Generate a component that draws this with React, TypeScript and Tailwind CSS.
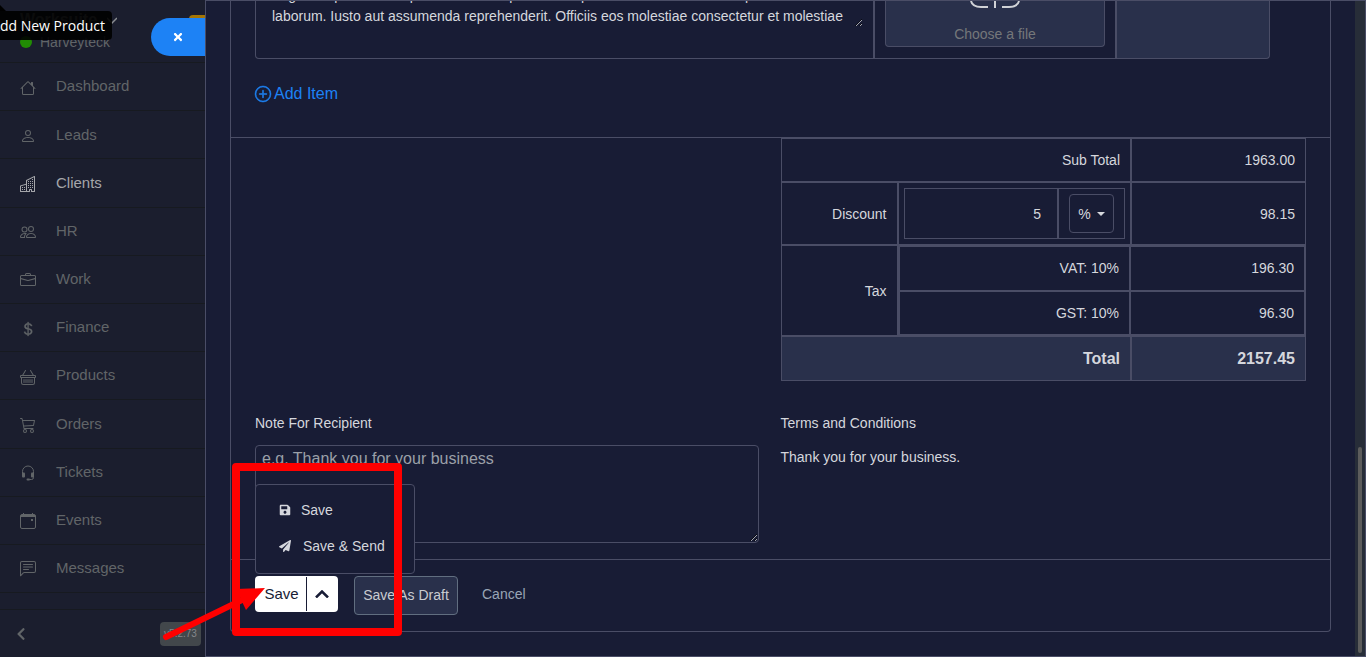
import { useState } from "react"
import type { ReactNode } from "react"
import {
  BsBasket,
  BsBriefcase,
  BsBuildings,
  BsCart3,
  BsChatLeftText,
  BsCurrencyDollar,
  BsHouse,
  BsPeople,
  BsPerson,
  BsPlusCircle,
} from "react-icons/bs"
import { FaChevronLeft, FaPaperPlane, FaSave, FaTimes } from "react-icons/fa"
import clsx from "clsx"

function EventsIcon() {
  return (
    <svg className="size-4" viewBox="0 0 16 16" fill="none" stroke="currentColor">
      <rect x="0.5" y="1.5" width="15" height="14" rx="1.5" />
      <path d="M1 2.5h14M1 3.5h14" />
      <path d="M3.5 0v2M12.5 0v2" />
      <rect x="11" y="6" width="2" height="2" fill="currentColor" stroke="none" />
    </svg>
  )
}

function TicketsIcon() {
  return (
    <svg className="size-4" viewBox="0 0 16 16" fill="none" stroke="currentColor">
      <path d="M2.5 9V6.5a5.5 5.5 0 0 1 11 0v6a2 2 0 0 1-2 2H9.5" />
      <rect x="2" y="7.5" width="3" height="5" rx="1" fill="currentColor" stroke="none" />
      <rect x="11" y="7.5" width="3" height="5" rx="1" fill="currentColor" stroke="none" />
      <rect x="6.5" y="13.5" width="3.5" height="2" rx="1" fill="currentColor" stroke="none" />
    </svg>
  )
}

interface MenuItem {
  label: string
  icon: ReactNode
  active?: boolean
}

const menu: MenuItem[] = [
  { label: "Dashboard", icon: <BsHouse /> },
  { label: "Leads", icon: <BsPerson /> },
  { label: "Clients", icon: <BsBuildings />, active: true },
  { label: "HR", icon: <BsPeople /> },
  { label: "Work", icon: <BsBriefcase /> },
  { label: "Finance", icon: <BsCurrencyDollar stroke="currentColor" strokeWidth="0.3" /> },
  { label: "Products", icon: <BsBasket /> },
  { label: "Orders", icon: <BsCart3 /> },
  { label: "Tickets", icon: <TicketsIcon /> },
  { label: "Events", icon: <EventsIcon /> },
  { label: "Messages", icon: <BsChatLeftText /> },
]

const taxes = [
  { label: "VAT: 10%", amount: "196.30" },
  { label: "GST: 10%", amount: "96.30" },
]

const description =
  "Fugiat corporis est adipisci maxime explicabo ut aperiam nesciunt dolore et ipsam\nlaborum. Iusto aut assumenda reprehenderit. Officiis eos molestiae consectetur et molestiae"

function Sidebar() {
  return (
    <aside className="relative flex w-[205px] shrink-0 flex-col overflow-hidden bg-[#1b1e2e] text-[#616568]">
      <header className="h-[63px] border-b border-[#171a20] pl-5">
        <div className="flex h-8 items-center gap-2.5 pt-2">
          <h1 className="text-base font-bold text-[#74787b]">Worksuite</h1>
          <svg className="size-2.5" viewBox="0 0 10 10" fill="none" stroke="#8b8e92" strokeWidth="1.5">
            <path d="M0 3l5 5 5-5" />
          </svg>
        </div>
        <div className="flex items-center gap-2">
          <span className="size-3 rounded-full bg-[#218c04]" />
          <span className="text-sm leading-5">Harveyteck</span>
        </div>
      </header>

      {/* User avatar */}
      <div className="absolute top-[15px] right-0 h-8 w-4 rounded-tl bg-[#a57605]" />

      {/* Tooltip */}
      <div className="absolute top-[11px] left-0 flex h-[29px] w-28 items-center justify-end rounded-r bg-black/90 pr-[7px]">
        <span className="font-['Open_Sans',sans-serif] text-sm whitespace-nowrap text-white">Add New Product</span>
      </div>
      <svg className="absolute top-[5px] left-0 h-1.5 w-1.5" viewBox="0 0 6 6">
        <path d="M0 0l6 6H0z" fill="#000" />
      </svg>

      <button
        type="button"
        aria-label="Close"
        className="absolute top-[18px] right-0 flex h-[38px] w-[54px] items-center justify-center rounded-l-full bg-[#1d82f5] text-white"
      >
        <FaTimes className="size-3" />
      </button>

      <nav className="flex flex-1 flex-col">
        {menu.map((item) => (
          <a
            key={item.label}
            href="#"
            className={clsx(
              "flex flex-1 items-center gap-5 border-b border-[#171a20] pl-5 text-[15px]",
              item.active && "text-[#a5a6aa]",
            )}
          >
            <span className="flex w-4 justify-center pt-0.5 text-base">{item.icon}</span>
            <span>{item.label}</span>
          </a>
        ))}
      </nav>

      <footer className="mt-4 flex h-12 items-center justify-between border-t border-[#171a20] pr-1 pl-3.5">
        <button type="button" aria-label="Collapse sidebar">
          <FaChevronLeft className="size-3.5" />
        </button>
        <span className="flex h-6 w-[41px] items-center justify-center rounded bg-[#42474b] text-[10px] text-[#85888b]">
          v5.2.73
        </span>
      </footer>
    </aside>
  )
}

function ItemRow() {
  return (
    <div className="mr-9 flex h-[58px]">
      <div className="flex-1 rounded-bl border border-t-0 border-[#4a4d66] pr-2.5">
        <textarea
          aria-label="Description"
          rows={2}
          defaultValue={description}
          className="-mt-4 block h-[42px] w-full resize overflow-hidden pr-2 pl-4 text-sm leading-[21px] outline-none"
        />
      </div>
      <div className="w-[242px] border border-t-0 border-[#4a4d66] px-2.5">
        <button
          type="button"
          className="flex h-[46px] w-full flex-col items-center rounded-b border border-t-0 border-[#4a4d66] bg-[#29304b] text-sm text-[#75777a]"
        >
          <svg className="h-[23px] w-[50px] shrink-0" viewBox="0 0 50 23" fill="none" stroke="#d0d2d6" strokeWidth="2">
            <path d="M1 0c1 4 5 6 10 6h7M49 0c-1 4-5 6-10 6h-7M25 0v7" />
          </svg>
          <span>Choose a file</span>
        </button>
      </div>
      <div className="w-[154px] rounded-br border border-t-0 border-[#4a4d66] bg-[#29304b]" />
    </div>
  )
}

function Totals() {
  const cell = "border border-[#4a4d66] px-2.5"

  return (
    <table className="w-full table-fixed border-separate border-spacing-0 text-right text-sm">
      <colgroup>
        <col className="w-[117px]" />
        <col />
        <col className="w-[175px]" />
      </colgroup>
      <tbody>
        <tr className="h-11">
          <td colSpan={2} className={cell}>Sub Total</td>
          <td className={cell}>1963.00</td>
        </tr>
        <tr>
          <td className={cell}>
            <label htmlFor="discount">Discount</label>
          </td>
          <td className="border border-[#4a4d66] p-[5px]">
            <div className="flex">
              <input
                id="discount"
                type="text"
                defaultValue="5"
                className="min-w-0 flex-1 border border-[#4a4d66] px-4 text-right outline-none"
              />
              <div className="border border-[#4a4d66] px-2.5 py-[5px]">
                <button
                  type="button"
                  className="flex h-[39px] w-[45px] items-center justify-center gap-1.5 rounded border border-[#4a4d66]"
                >
                  %
                  <svg className="h-1 w-2" viewBox="0 0 8 4" fill="currentColor">
                    <path d="M0 0h8L4 4z" />
                  </svg>
                </button>
              </div>
            </div>
          </td>
          <td className={cell}>98.15</td>
        </tr>
        <tr className="h-[91px]">
          <td className={cell}>Tax</td>
          <td colSpan={2} className="border border-[#4a4d66] p-0">
            <table className="h-[89px] w-full table-fixed border-separate border-spacing-0">
              <colgroup>
                <col />
                <col className="w-[175px]" />
              </colgroup>
              <tbody>
                {taxes.map((tax) => (
                  <tr key={tax.label}>
                    <td className={cell}>{tax.label}</td>
                    <td className={cell}>{tax.amount}</td>
                  </tr>
                ))}
              </tbody>
            </table>
          </td>
        </tr>
        <tr className="h-[45px] bg-[#29304b] text-base font-bold">
          <td colSpan={2} className={cell}>Total</td>
          <td className={cell}>2157.45</td>
        </tr>
      </tbody>
    </table>
  )
}

function SaveActions() {
  const [open, setOpen] = useState(true)

  return (
    <div className="flex items-start border-t border-[#4a4d66] px-6 pt-4 pb-4">
      <div className="relative mr-4 flex h-9 rounded bg-white text-[#181c35]">
        <button type="button" className="w-[51px] rounded-l pl-0.5 text-[15px]">
          Save
        </button>
        <span className="my-px w-px bg-[#181c35]" />
        <button
          type="button"
          aria-label="More save options"
          className="flex w-[31px] items-center justify-center pr-0.5"
          onClick={() => setOpen(!open)}
        >
          <svg className="h-2 w-3.5" viewBox="0 0 14 8" fill="none" stroke="currentColor" strokeWidth="2.5">
            <path d="M1 7.5l6-6 6 6" />
          </svg>
        </button>
        {open && (
          <div className="absolute bottom-[38px] left-0 flex h-[90px] w-40 flex-col rounded border border-[#4a4d66] bg-[#181c35] pt-[7px] text-sm text-[#d5d7dd]">
            <button type="button" className="flex h-9 items-center gap-2.5 pl-[23px] whitespace-nowrap">
              <FaSave className="size-3" />
              Save
            </button>
            <button type="button" className="flex h-9 items-center gap-3 pl-[23px] whitespace-nowrap">
              <FaPaperPlane className="size-3" />
              Save &amp; Send
            </button>
          </div>
        )}
      </div>
      <button
        type="button"
        className="h-[39px] w-[104px] rounded border border-[#616e80] bg-[#29304b] pb-0.5 text-sm text-[#c9cbd1]"
      >
        Save As Draft
      </button>
      <a href="#" className="ml-6 text-sm leading-9 text-[#99a5b5]">
        Cancel
      </a>
    </div>
  )
}

export default function App() {
  return (
    <div className="relative flex h-screen overflow-hidden bg-[#181c35] font-['Liberation_Sans',Arial,sans-serif] text-[#d5d7dd] scheme-dark">
      <Sidebar />

      <main className="flex min-w-0 flex-1 overflow-hidden border border-[#4a4d66]">
        <div className="min-w-0 flex-1 px-6 pb-6">
          <form className="rounded-b border border-t-0 border-[#4a4d66]">
            <div className="px-6">
              <ItemRow />
              <button
                type="button"
                className="mt-[25px] mb-[33px] flex h-5 items-center gap-[3px] text-base text-[#1d82f5]"
              >
                <BsPlusCircle stroke="currentColor" strokeWidth="0.5" className="overflow-visible" />
                Add Item
              </button>
            </div>

            <div className="border-t border-[#4a4d66] px-6 pb-4">
              <div className="ml-[50%]">
                <Totals />
              </div>
              <div className="mt-8 grid grid-cols-2 text-sm leading-[21px]">
                <div className="pr-[22px]">
                  <label htmlFor="note" className="block">
                    Note For Recipient
                  </label>
                  <textarea
                    id="note"
                    placeholder="e.g. Thank you for your business"
                    className="mt-[11px] block h-[98px] w-full resize rounded border border-[#4a4d66] px-1.5 py-px text-base outline-none placeholder:text-[#9ba0a8]"
                  />
                </div>
                <div>
                  <h2>Terms and Conditions</h2>
                  <p className="mt-[13px]">Thank you for your business.</p>
                </div>
              </div>
            </div>

            <SaveActions />
          </form>
        </div>

        {/* Scroll track */}
        <div className="flex w-2.5 flex-col items-center justify-end bg-[#272d38] pb-[3px]">
          <div className="h-[206px] w-1 rounded-full bg-[#5c5c5c]" />
        </div>
      </main>

      {/* Highlighted step */}
      <div className="pointer-events-none absolute top-[463px] left-[232px] h-[173px] w-[170px] rounded border-8 border-[#ff0000]" />
      <svg
        className="pointer-events-none absolute top-[580px] left-[160px] h-[65px] w-[110px]"
        viewBox="160 580 110 65"
        fill="#ff0000"
      >
        <path d="M166 637L244 599" stroke="#ff0000" strokeWidth="6" strokeLinecap="round" />
        <path d="M265 588L236 589L246 610z" />
      </svg>
    </div>
  )
}
